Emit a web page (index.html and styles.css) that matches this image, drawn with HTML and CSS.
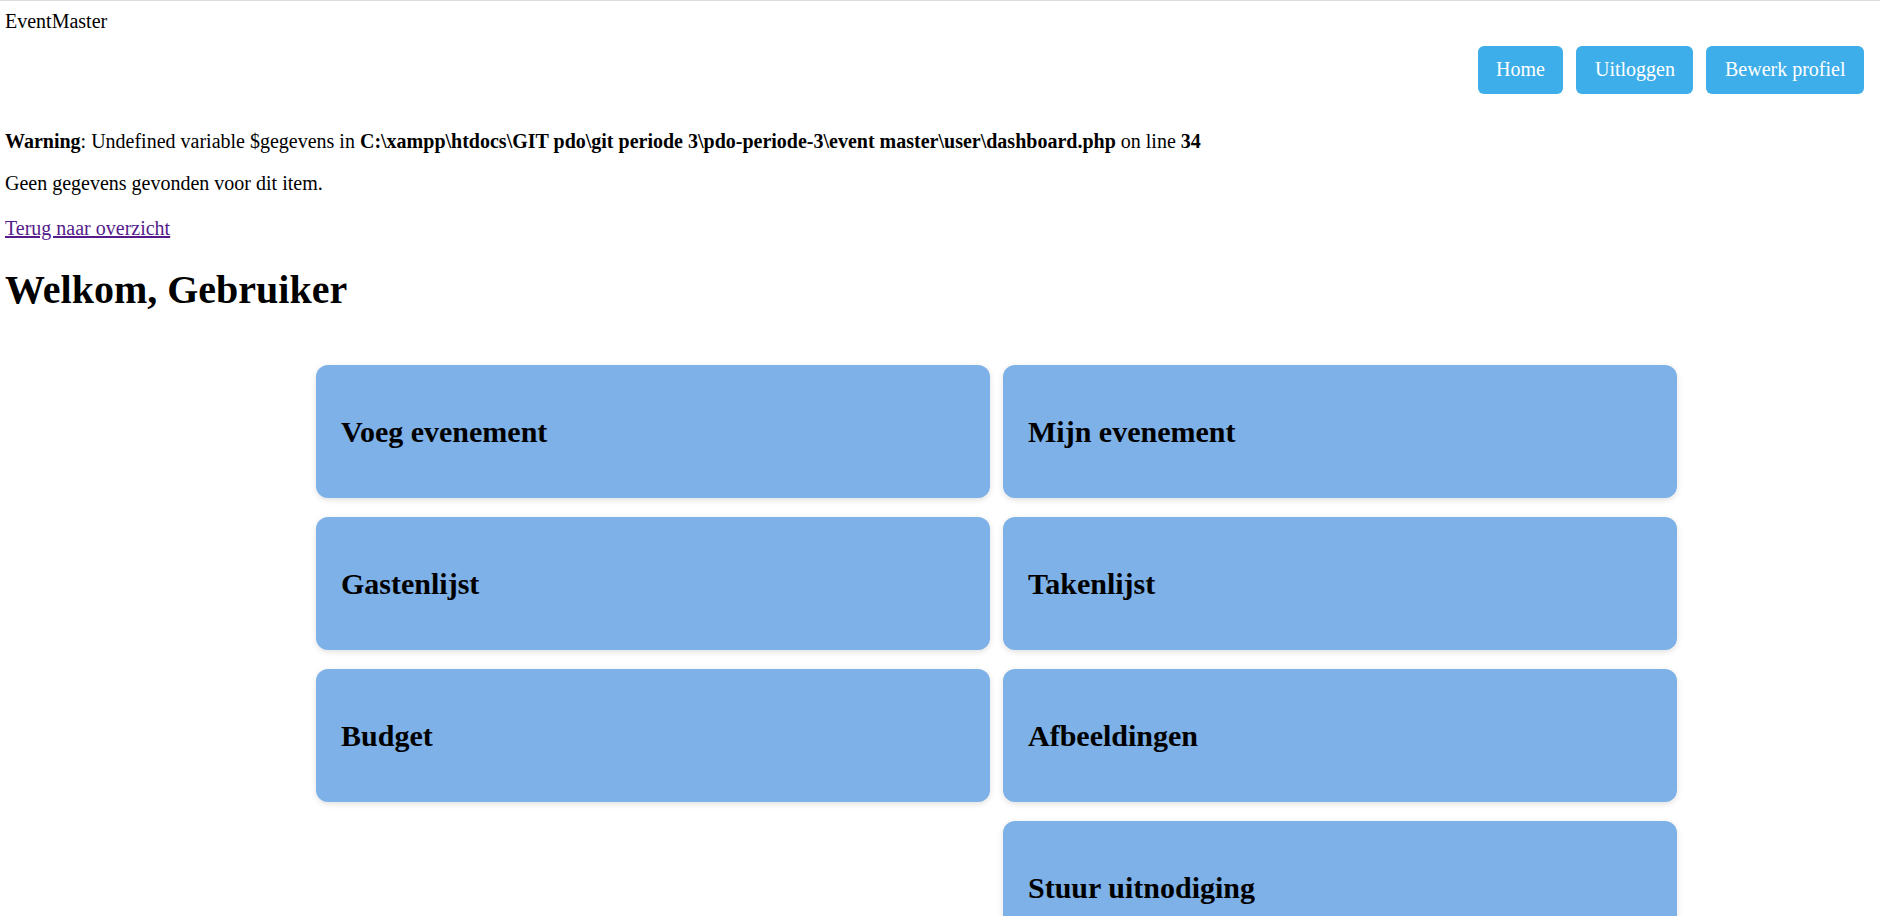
FILE: index.html
```html
<!DOCTYPE html>
<html lang="nl">
<head>
<meta charset="utf-8">
<title>EventMaster</title>
<link rel="stylesheet" href="styles.css">
</head>
<body>
<header class="topbar">
  <div class="brand">EventMaster</div>
  <nav class="nav">
    <a class="btn" href="#">Home</a>
    <a class="btn" href="#">Uitloggen</a>
    <a class="btn" href="#">Bewerk profiel</a>
  </nav>
</header>
<div class="warning"><b>Warning</b>: Undefined variable $gegevens in <b>C:\xampp\htdocs\GIT pdo\git periode 3\pdo-periode-3\event master\user\dashboard.php</b> on line <b>34</b></div>
<p class="msg">Geen gegevens gevonden voor dit item.</p>
<a class="back" href="#">Terug naar overzicht</a>
<h1 class="welcome">Welkom, Gebruiker</h1>
<main class="grid">
  <div class="card"><h2>Voeg evenement</h2></div>
  <div class="card"><h2>Mijn evenement</h2></div>
  <div class="card"><h2>Gastenlijst</h2></div>
  <div class="card"><h2>Takenlijst</h2></div>
  <div class="card"><h2>Budget</h2></div>
  <div class="card"><h2>Afbeeldingen</h2></div>
  <div class="card card-right"><h2>Stuur uitnodiging</h2></div>
</main>
</body>
</html>
```
FILE: styles.css
```css
html, body {
  margin: 0;
  padding: 0;
}
body {
  border-top: 1px solid #dcdcdc;
  padding: 9px 5px 0 5px;
  font-family: "Liberation Serif", "Times New Roman", serif;
  font-size: 20px;
  color: #000;
  background: #fff;
}
.topbar {
  display: flex;
  flex-direction: column;
}
.brand {
  line-height: 23px;
}
.nav {
  display: flex;
  justify-content: flex-end;
  gap: 13px;
  margin-top: 13px;
  padding-right: 11px;
}
.btn {
  display: inline-block;
  background: #3daee9;
  color: #fff;
  text-decoration: none;
  padding: 12px 18.5px 13px;
  line-height: 23px;
  border-radius: 6px;
}
.warning {
  margin-top: 36px;
  line-height: 23px;
}
.msg {
  margin: 19px 0 22px;
  line-height: 23px;
}
.back {
  color: #551a8b;
  line-height: 23px;
}
.welcome {
  font-size: 40px;
  line-height: 46px;
  margin: 27px 0 0 0;
}
.grid {
  display: grid;
  grid-template-columns: 674px 674px;
  column-gap: 13px;
  row-gap: 19px;
  margin-left: 311px;
  padding-top: 52px;
}
.card {
  background: #7db1e7;
  border-radius: 12px;
  padding: 24px 25px;
  box-shadow: 0 2px 6px rgba(0, 0, 0, 0.12);
}
.card-right {
  grid-column: 2;
}
.card h2 {
  margin: 25px 0;
  font-size: 30px;
  line-height: 35px;
  font-weight: bold;
}
```
